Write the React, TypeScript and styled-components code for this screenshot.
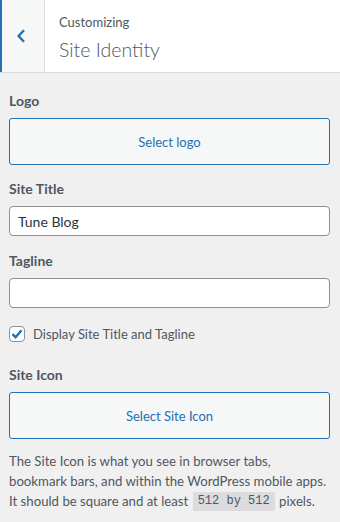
import React from "react";
import styled, { createGlobalStyle } from "styled-components";

const Global = createGlobalStyle`
  html, body { margin: 0; padding: 0; background: #f0f0f1; }
  body { font-family: Lato, "Noto Sans", sans-serif; color: #50575e; font-size: 13px; }
  * { box-sizing: border-box; }
`;

const Panel = styled.div`
  width: 340px;
  min-height: 522px;
  background: #f0f0f1;
`;

const Header = styled.div`
  display: flex;
  height: 73px;
  background: #fff;
  border-bottom: 1px solid #dcdcde;
`;

const BackButton = styled.div`
  width: 45px;
  flex: 0 0 45px;
  background: #f6f7f7;
  border-left: 2px solid #2271b1;
  border-right: 1px solid #dcdcde;
  display: flex;
  align-items: center;
  justify-content: center;
  padding-right: 4px;
`;

const TitleBlock = styled.div`
  display: flex;
  flex-direction: column;
  padding: 12px 0 0 14px;
`;

const Small = styled.span`
  font-size: 13px;
  line-height: 20px;
  color: #50575e;
`;

const Big = styled.span`
  font-size: 19.5px;
  line-height: 28px;
  font-weight: 300;
  color: #50575e;
  margin-top: 4px;
`;

const Content = styled.div`
  padding: 16px 10px 0 9px;
`;

const Control = styled.div<{ $gap?: number }>`
  margin-bottom: ${(p) => p.$gap ?? 12}px;
`;

const Label = styled.div`
  font-size: 14px;
  line-height: 24px;
  font-weight: 700;
  color: #50575e;
  margin-bottom: 5px;
`;

const UploadButton = styled.div`
  height: 47px;
  border: 1px solid #2271b1;
  border-radius: 3px;
  background: #f6f7f7;
  color: #2271b1;
  font-size: 13px;
  display: flex;
  align-items: center;
  justify-content: center;
`;

const TextInput = styled.input`
  display: block;
  width: 100%;
  height: 30px;
  border: 1px solid #8c8f94;
  border-radius: 4px;
  background: #fff;
  padding: 0 8px;
  font-family: inherit;
  font-size: 14px;
  color: #2c3338;
  outline: none;
`;

const CheckRow = styled.label`
  display: flex;
  align-items: center;
  gap: 8px;
  font-size: 13px;
  color: #50575e;
`;

const Box = styled.span`
  width: 16px;
  height: 16px;
  border: 1px solid #8c8f94;
  border-radius: 4px;
  background: #fff;
  display: flex;
  align-items: center;
  justify-content: center;
`;

const Description = styled.p`
  margin: 0;
  font-size: 13.2px;
  line-height: 20px;
  color: #50575e;
`;

const Code = styled.code`
  display: inline-block;
  font-family: "Liberation Mono", "DejaVu Sans Mono", monospace;
  font-size: 12px;
  line-height: 19px;
  background: #dcdcde;
  padding: 0 5px;
  margin: 0 1px;
  vertical-align: top;
  position: relative;
  top: 1px;
`;

export default function App() {
  return (
    <>
      <Global />
      <Panel>
        <Header>
          <BackButton>
            <svg width="10" height="14" viewBox="0 0 10 14">
              <path d="M8 1.2 L2.6 7 L8 12.8" fill="none" stroke="#2271b1" strokeWidth="2.4" />
            </svg>
          </BackButton>
          <TitleBlock>
            <Small>Customizing</Small>
            <Big>Site Identity</Big>
          </TitleBlock>
        </Header>
        <Content>
          <Control>
            <Label>Logo</Label>
            <UploadButton>Select logo</UploadButton>
          </Control>
          <Control $gap={13}>
            <Label>Site Title</Label>
            <TextInput defaultValue="Tune Blog" />
          </Control>
          <Control $gap={18}>
            <Label>Tagline</Label>
            <TextInput defaultValue="" />
          </Control>
          <Control $gap={21}>
            <CheckRow>
              <Box>
                <svg width="14" height="14" viewBox="0 0 14 14">
                  <path d="M2.5 7.2 L5.6 10.2 L11.5 3.2" fill="none" stroke="#2271b1" strokeWidth="2.4" />
                </svg>
              </Box>
              Display Site Title and Tagline
            </CheckRow>
          </Control>
          <Control $gap={12}>
            <Label>Site Icon</Label>
            <UploadButton>Select Site Icon</UploadButton>
          </Control>
          <Description>
            The Site Icon is what you see in browser tabs,
            <br />
            bookmark bars, and within the WordPress mobile apps.
            <br />
            It should be square and at least <Code>512 by 512</Code> pixels.
          </Description>
        </Content>
      </Panel>
    </>
  );
}
